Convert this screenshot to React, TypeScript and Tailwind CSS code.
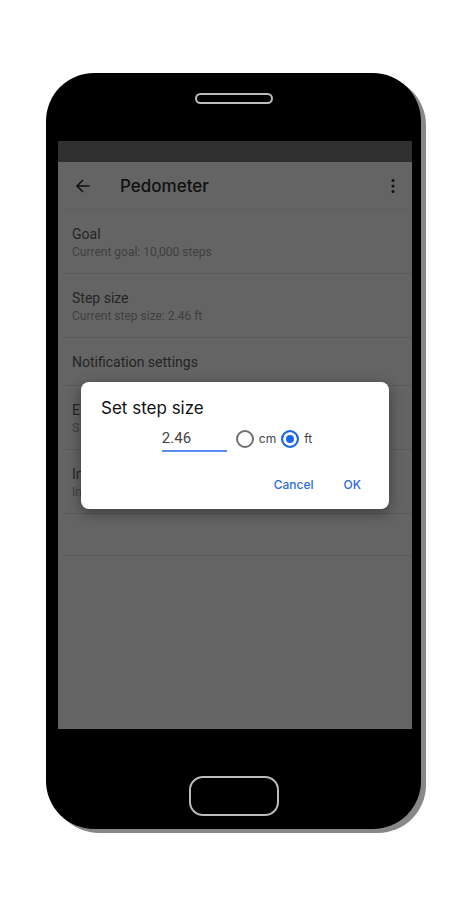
import { useState } from 'react';

interface Setting {
  title: string;
  summary?: string;
}

interface UnitOptionProps {
  unit: string;
  selected: boolean;
  onSelect: (unit: string) => void;
}

const settings: Setting[] = [
  { title: 'Goal', summary: 'Current goal: 10,000 steps' },
  { title: 'Step size', summary: 'Current step size: 2.46 ft' },
  { title: 'Notification settings' },
  { title: 'E', summary: 'S' },
  { title: 'In', summary: 'In' },
];

const UnitOption = ({ unit, selected, onSelect }: UnitOptionProps) => {
  return (
    <label className="flex items-center gap-[5px] text-xs text-[#444444]">
      <input
        type="radio"
        name="unit"
        value={unit}
        checked={selected}
        onChange={() => onSelect(unit)}
        className="size-[18px] appearance-none rounded-full border-2 border-[#707070] bg-white checked:border-[#1a66e8] checked:bg-[#1a66e8] checked:shadow-[inset_0_0_0_3px_white]"
      />
      {unit}
    </label>
  );
};

const StepSizeDialog = () => {
  const [size, setSize] = useState('2.46');
  const [unit, setUnit] = useState('ft');

  return (
    <div
      role="dialog"
      aria-labelledby="dialog-title"
      className="w-full rounded-lg bg-white px-5 pt-4 pb-[10px] font-['Inter',sans-serif] shadow-[0_4px_14px_rgba(0,0,0,0.4)]"
    >
      <h2 id="dialog-title" className="text-[17px] leading-5 text-[#111111]">
        Set step size
      </h2>
      <div className="flex items-center justify-center gap-[5px] pt-2 pl-1">
        <input
          aria-label="Step size"
          value={size}
          onChange={(e) => setSize(e.target.value)}
          className="mr-1 h-[26px] w-[65px] border-b-2 border-[#5b8def] pb-px font-['Roboto',sans-serif] text-[15px] text-[#444444] outline-none"
        />
        <UnitOption unit="cm" selected={unit === 'cm'} onSelect={setUnit} />
        <UnitOption unit="ft" selected={unit === 'ft'} onSelect={setUnit} />
      </div>
      <div className="flex justify-end gap-[14px] pt-[19px] text-xs font-medium text-[#2a6ae0]">
        <button type="button" className="h-7 px-2">
          Cancel
        </button>
        <button type="button" className="h-7 px-2">
          OK
        </button>
      </div>
    </div>
  );
};

const App = () => {
  return (
    <div className="min-h-screen bg-white pt-[73px] pr-[43px] pb-[70px] pl-[46px]">
      <main className="flex flex-col rounded-[48px] bg-black pr-[9px] pl-3 font-['Roboto',sans-serif] shadow-[5px_4px_0_#888888]">
        <div className="flex h-[68px] justify-center pt-5 pr-[3px]">
          <div className="h-[11px] w-[78px] rounded-full border-2 border-[#bbbbbb]" />
        </div>

        <div className="h-[21px] bg-[#303030]" />
        <div className="relative h-[567px] bg-[#646464]">
          <header className="flex h-12 items-center border-b border-[#606060] pt-px pr-[11px] pl-[17px] text-[#111111]">
            <button type="button" aria-label="Back">
              <svg viewBox="0 0 16 16" className="size-4" fill="none" stroke="currentColor" strokeWidth="1.5">
                <path d="M14.5 8H2M8 2L2 8l6 6" />
              </svg>
            </button>
            <h1 className="flex-1 pt-[2px] pl-[29px] font-['Inter',sans-serif] text-[17px] font-medium">
              Pedometer
            </h1>
            <button type="button" aria-label="More options">
              <svg viewBox="0 0 16 16" className="size-4" fill="currentColor">
                <circle cx="8" cy="2.5" r="1.5" />
                <circle cx="8" cy="8" r="1.5" />
                <circle cx="8" cy="13.5" r="1.5" />
              </svg>
            </button>
          </header>

          <ul className="pl-1">
            {settings.map(({ title, summary }) => (
              <li key={title} className="border-b border-[#5a5a5a] pt-[15px] pb-[13px] pl-[10px]">
                <p className="text-sm leading-[19px] text-[#242424]">{title}</p>
                {summary && <p className="text-xs leading-4 text-[#404040]">{summary}</p>}
              </li>
            ))}
            <li className="h-[42px] border-b border-[#5a5a5a]" />
          </ul>

          <div className="absolute inset-0 flex items-center px-[23px]">
            <StepSizeDialog />
          </div>
        </div>

        <div className="flex h-[100px] justify-center pt-[47px] pr-[3px]">
          <div className="h-10 w-[90px] rounded-[14px] border-2 border-[#bbbbbb]" />
        </div>
      </main>
    </div>
  );
};

export default App;
